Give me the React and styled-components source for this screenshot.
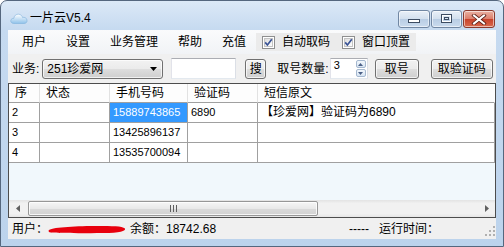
import React from 'react';
import styled, { createGlobalStyle } from 'styled-components';

const UI_FONT = '"Liberation Sans", "Noto Sans CJK SC", sans-serif';

const GlobalStyle = createGlobalStyle`
  html, body {
    margin: 0;
    padding: 0;
    background: #ffffff;
  }
  body {
    font-family: ${UI_FONT};
    font-size: 12px;
    color: #000;
  }
  * {
    box-sizing: border-box;
  }
`;

const Window = styled.div`
  width: 504px;
  height: 247px;
  border: 1px solid #55677e;
  border-radius: 7px 7px 0 0;
  background: linear-gradient(180deg, #dce9f7 0%, #c6daf0 28px, #bcd3ec 100%);
  padding: 0 7px 7px;
  display: flex;
  flex-direction: column;
  overflow: hidden;
`;

const TitleBar = styled.div`
  height: 29px;
  flex: none;
  display: flex;
  align-items: flex-start;
  padding: 0 1px 0 2px;
`;

const TitleIcon = styled.svg`
  margin-top: 11px;
  flex: none;
`;

const TitleText = styled.span`
  margin: 11px 0 0 2px;
  line-height: 12px;
  font-size: 12px;
  color: #000;
`;

const CaptionGroup = styled.div`
  margin: 9px 0 0 auto;
  display: flex;
  gap: 1px;
`;

const CaptionButton = styled.div`
  width: ${(p) => p.$w}px;
  height: 18px;
  display: flex;
  align-items: center;
  justify-content: center;
  border: 1px solid ${(p) => (p.$close ? '#8a3a2e' : '#7187a3')};
  border-radius: 3px;
  background: ${(p) =>
    p.$close
      ? 'linear-gradient(180deg, #eab2a3 0%, #dc7f6c 48%, #c8432c 52%, #d9694d 100%)'
      : 'linear-gradient(180deg, #e9f0f8 0%, #d3e0ee 48%, #b9cde4 52%, #cadbee 100%)'};
  box-shadow: inset 0 0 0 1px rgba(255, 255, 255, 0.55);
`;

const Client = styled.div`
  flex: 1;
  min-height: 0;
  background: #f0f0f0;
  display: flex;
  flex-direction: column;
`;

const MenuBar = styled.div`
  height: 24px;
  flex: none;
  display: flex;
  align-items: center;
  padding-left: 4px;
  background: linear-gradient(180deg, #fafbfc 0%, #f1f3f6 100%);
`;

const MenuItem = styled.span`
  padding: 0 ${(p) => p.$pad || 10}px;
  line-height: 16px;
`;

const CheckGroup = styled.div`
  height: 18px;
  display: flex;
  align-items: center;
  padding: 0 6px;
  background: #ebebeb;
  margin-left: ${(p) => p.$ml || 0}px;
`;

const CheckItem = styled.label`
  display: flex;
  align-items: center;
  gap: 7px;
  margin-left: ${(p) => p.$ml || 0}px;
  line-height: 16px;
`;

const Toolbar = styled.div`
  height: 29px;
  flex: none;
  display: flex;
  align-items: center;
  padding-left: 4px;
`;

const Label = styled.span`
  margin-left: ${(p) => p.$ml || 0}px;
  line-height: 16px;
  white-space: nowrap;
`;

const winButton = `
  border: 1px solid #707070;
  border-radius: 3px;
  background: linear-gradient(180deg, #f2f2f2 0%, #ebebeb 48%, #dddddd 52%, #cfcfcf 100%);
  box-shadow: inset 0 0 0 1px rgba(255, 255, 255, 0.7);
`;

const Combo = styled.div`
  ${winButton}
  width: 121px;
  height: 20px;
  margin-left: 3px;
  display: flex;
  align-items: center;
  padding: 0 5px 0 4px;
  justify-content: space-between;
  line-height: 16px;
`;

const TextBox = styled.div`
  width: ${(p) => p.$w}px;
  height: 21px;
  margin-left: ${(p) => p.$ml || 0}px;
  background: #fff;
  border: 1px solid #abadb3;
  border-color: #abadb3 #dbdfe6 #e3e9ef #e2e3ea;
  display: flex;
`;

const SpinValue = styled.span`
  flex: 1;
  font-size: 11px;
  line-height: 11px;
  padding: 1px 0 0 3px;
`;

const SpinCol = styled.div`
  width: 11px;
  display: flex;
  flex-direction: column;
  gap: 1px;
  padding: 1px 1px 1px 0;
`;

const SpinButton = styled.div`
  flex: 1;
  border: 1px solid #a5b8cf;
  border-radius: 2px;
  background: linear-gradient(180deg, #f2f7fc 0%, #d8e5f3 100%);
  display: flex;
  align-items: center;
  justify-content: center;
`;

const Button = styled.div`
  ${winButton}
  width: ${(p) => p.$w}px;
  height: 20px;
  margin-left: ${(p) => p.$ml || 0}px;
  display: flex;
  align-items: center;
  justify-content: center;
  line-height: 16px;
`;

const Grid = styled.div`
  height: 135px;
  flex: none;
  border: 1px solid #4d4d4d;
  display: flex;
  flex-direction: column;
  background: #f1f8fc;
`;

const Row = styled.div`
  display: grid;
  grid-template-columns: 31px 70px 78px 70px 1fr;
  height: ${(p) => (p.$head ? 19 : 20)}px;
  flex: none;
`;

const HeadCell = styled.div`
  background: #fdfdfd;
  border-right: 1px solid ${(p) => (p.$last ? '#fdfdfd' : '#e2e2e2')};
  border-bottom: 1px solid #a0a0a0;
  padding-left: 6px;
  line-height: 18px;
`;

const Cell = styled.div`
  background: ${(p) => (p.$sel ? '#3399ff' : '#ffffff')};
  color: ${(p) => (p.$sel ? '#ffffff' : '#000000')};
  border-right: 1px solid #a0a0a0;
  border-bottom: 1px solid #a0a0a0;
  padding-left: 3px;
  font-size: ${(p) => (p.$num ? 11 : 12)}px;
  line-height: 19px;
  white-space: nowrap;
  overflow: hidden;
`;

const Fill = styled.div`
  flex: 1;
`;

const HScroll = styled.div`
  height: 17px;
  flex: none;
  display: flex;
  background: linear-gradient(180deg, #e3e3e3 0%, #f1f1f1 20%, #f1f1f1 80%, #e6e6e6 100%);
`;

const ScrollArrow = styled.div`
  width: 17px;
  display: flex;
  align-items: center;
  justify-content: center;
  margin-left: ${(p) => (p.$right ? 'auto' : '0')};
`;

const Thumb = styled.div`
  width: 290px;
  margin: 1px 0 1px 2px;
  border: 1px solid #979797;
  border-radius: 2px;
  background: linear-gradient(180deg, #f6f6f6 0%, #e9e9e9 50%, #dadada 51%, #d3d3d3 100%);
  box-shadow: inset 0 0 0 1px rgba(255, 255, 255, 0.8);
  display: flex;
  align-items: center;
  justify-content: center;
`;

const StatusBar = styled.div`
  flex: 1;
  display: flex;
  align-items: center;
  padding-left: 4px;
  line-height: 16px;
`;

const StatusRight = styled.div`
  margin-left: auto;
  display: flex;
  align-items: center;
`;

const Grip = styled.svg`
  margin: 4px 1px 0 46px;
`;

const Check = () => (
  <svg width="13" height="13" viewBox="0 0 13 13">
    <defs>
      <linearGradient id="cb" x1="0" y1="0" x2="1" y2="1">
        <stop offset="0" stopColor="#dcdcdc" />
        <stop offset="1" stopColor="#ffffff" />
      </linearGradient>
    </defs>
    <rect x="0.5" y="0.5" width="12" height="12" fill="#fff" stroke="#8e8f8f" />
    <rect x="2.5" y="2.5" width="8" height="8" fill="url(#cb)" stroke="#c4c4c4" />
    <path d="M3.2 6.4 L5.4 9 L9.8 3.3" fill="none" stroke="#3a5496" strokeWidth="1.7" />
  </svg>
);

const rows = [
  { no: '2', state: '', phone: '15889743865', code: '6890', msg: '【珍爱网】验证码为6890', sel: true },
  { no: '3', state: '', phone: '13425896137', code: '', msg: '' },
  { no: '4', state: '', phone: '13535700094', code: '', msg: '' },
];

export default function App() {
  return (
    <>
      <GlobalStyle />
      <Window>
        <TitleBar>
          <TitleIcon width="18" height="12" viewBox="0 0 18 12">
            <defs>
              <linearGradient id="cloud" x1="0" y1="0" x2="0" y2="1">
                <stop offset="0" stopColor="#ffffff" />
                <stop offset="1" stopColor="#8fc2ea" />
              </linearGradient>
            </defs>
            <path
              d="M4 11.5 C1.5 11.5 0.5 9.8 0.8 8.4 C1.1 6.9 2.5 6.2 3.8 6.4 C4.2 3.6 6.2 2 8.6 2.2 C10.8 2.4 12.2 3.8 12.6 5.6 C14 4.9 16.6 5.6 17 8 C17.4 10.2 15.8 11.5 14.2 11.5 Z"
              fill="url(#cloud)"
              stroke="#7fb2dc"
              strokeWidth="0.6"
            />
          </TitleIcon>
          <TitleText>一片云V5.4</TitleText>
          <CaptionGroup>
            <CaptionButton $w={32}>
              <svg width="14" height="10" viewBox="0 0 14 10">
                <rect x="1.5" y="5.5" width="11" height="3" fill="#fff" stroke="#3c4c62" />
              </svg>
            </CaptionButton>
            <CaptionButton $w={31}>
              <svg width="14" height="10" viewBox="0 0 14 10">
                <rect x="1.5" y="0.5" width="10" height="8" fill="none" stroke="#3c4c62" />
                <rect x="2.5" y="1.5" width="8" height="6" fill="none" stroke="#fff" />
                <rect x="4.5" y="3.5" width="4" height="2" fill="none" stroke="#3c4c62" />
              </svg>
            </CaptionButton>
            <CaptionButton $w={32} $close>
              <svg width="16" height="11" viewBox="0 0 16 11">
                <path d="M3 1.5 L13 9.5 M13 1.5 L3 9.5" stroke="#5a2018" strokeWidth="3.6" strokeLinecap="square" />
                <path d="M3 1.5 L13 9.5 M13 1.5 L3 9.5" stroke="#ffffff" strokeWidth="2" strokeLinecap="square" />
              </svg>
            </CaptionButton>
          </CaptionGroup>
        </TitleBar>

        <Client>
          <MenuBar>
            <MenuItem>用户</MenuItem>
            <MenuItem>设置</MenuItem>
            <MenuItem>业务管理</MenuItem>
            <MenuItem>帮助</MenuItem>
            <MenuItem>充值</MenuItem>
            <CheckGroup>
              <CheckItem>
                <Check />
                自动取码
              </CheckItem>
              <CheckItem $ml={12}>
                <Check />
                窗口顶置
              </CheckItem>
            </CheckGroup>
          </MenuBar>

          <Toolbar>
            <Label>业务:</Label>
            <Combo>
              <span>251珍爱网</span>
              <svg width="7" height="4" viewBox="0 0 7 4">
                <path d="M0 0 H7 L3.5 4 Z" fill="#000" />
              </svg>
            </Combo>
            <TextBox $w={65} $ml={8} />
            <Button $w={21} $ml={9}>搜</Button>
            <Label $ml={11}>取号数量:</Label>
            <TextBox $w={38} $ml={1}>
              <SpinValue>3</SpinValue>
              <SpinCol>
                <SpinButton>
                  <svg width="5" height="3" viewBox="0 0 5 3">
                    <path d="M0 3 H5 L2.5 0 Z" fill="#4a5f86" />
                  </svg>
                </SpinButton>
                <SpinButton>
                  <svg width="5" height="3" viewBox="0 0 5 3">
                    <path d="M0 0 H5 L2.5 3 Z" fill="#4a5f86" />
                  </svg>
                </SpinButton>
              </SpinCol>
            </TextBox>
            <Button $w={44} $ml={7}>取号</Button>
            <Button $w={62} $ml={12}>取验证码</Button>
          </Toolbar>

          <Grid>
            <Row $head>
              <HeadCell>序</HeadCell>
              <HeadCell>状态</HeadCell>
              <HeadCell>手机号码</HeadCell>
              <HeadCell>验证码</HeadCell>
              <HeadCell $last>短信原文</HeadCell>
            </Row>
            {rows.map((r) => (
              <Row key={r.no}>
                <Cell $num>{r.no}</Cell>
                <Cell>{r.state}</Cell>
                <Cell $num $sel={r.sel}>{r.phone}</Cell>
                <Cell $num>{r.code}</Cell>
                <Cell>{r.msg}</Cell>
              </Row>
            ))}
            <Fill />
            <HScroll>
              <ScrollArrow>
                <svg width="4" height="7" viewBox="0 0 4 7">
                  <path d="M4 0 V7 L0 3.5 Z" fill="#606060" />
                </svg>
              </ScrollArrow>
              <Thumb>
                <svg width="7" height="7" viewBox="0 0 7 7">
                  <path d="M0.5 0 V7 M3.5 0 V7 M6.5 0 V7" stroke="#5f5f5f" strokeWidth="1" />
                </svg>
              </Thumb>
              <ScrollArrow $right>
                <svg width="4" height="7" viewBox="0 0 4 7">
                  <path d="M0 0 V7 L4 3.5 Z" fill="#606060" />
                </svg>
              </ScrollArrow>
            </HScroll>
          </Grid>

          <StatusBar>
            <Label>用户：</Label>
            <svg width="78" height="10" viewBox="0 0 78 10">
              <path
                d="M1 6 C6 3 30 2 50 2 C64 2 74 2 77 4.5 C78 7 72 9 55 9 C35 9.3 10 9.3 3 8.6 C0.5 8.2 0 7 1 6 Z"
                fill="#e8000d"
              />
            </svg>
            <Label $ml={4}>余额：18742.68</Label>
            <StatusRight>
              <Label>-----</Label>
              <Label $ml={10}>运行时间：</Label>
              <Grip width="10" height="10" viewBox="0 0 10 10">
                <rect x="8" y="0" width="2" height="2" fill="#b0b0b0" />
                <rect x="4" y="4" width="2" height="2" fill="#b0b0b0" />
                <rect x="8" y="4" width="2" height="2" fill="#b0b0b0" />
                <rect x="0" y="8" width="2" height="2" fill="#b0b0b0" />
                <rect x="4" y="8" width="2" height="2" fill="#b0b0b0" />
                <rect x="8" y="8" width="2" height="2" fill="#b0b0b0" />
              </Grip>
            </StatusRight>
          </StatusBar>
        </Client>
      </Window>
    </>
  );
}
